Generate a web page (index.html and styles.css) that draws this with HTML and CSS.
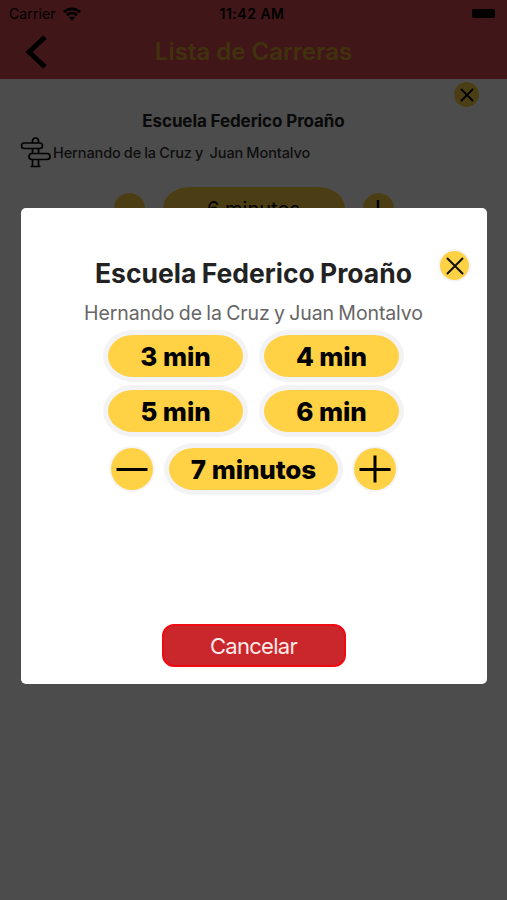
FILE: index.html
```
<!DOCTYPE html>
<html lang="es">

<head>
    <meta charset="UTF-8">
    <meta name="viewport" content="width=device-width, initial-scale=1.0">

    <title>Lista de Carreras</title>

    <link rel="stylesheet" href="styles.css">
</head>

<body>
    <header>
        <div class="estado">
            <div class="operadora">
                <span class="carrier">Carrier</span>
                <svg width="18" height="14" viewBox="0 0 18 14" fill="none" stroke="#000" stroke-width="2.8">
                    <path d="M1 5.2C5.5 .8 12.5 .8 17 5.2" />
                    <path d="M4 8.3c2.9-2.8 7.1-2.8 10 0" />
                    <path d="M9 13.4 6.1 10.5c1.8-1.4 4-1.4 5.8 0z" fill="#000" stroke="none" />
                </svg>
            </div>
            <span class="hora">11:42 AM</span>
            <div class="bateria"></div>
        </div>
        <div class="barra">
            <svg class="atras" width="22" height="34" viewBox="0 0 22 34" fill="none" stroke="#000" stroke-width="5">
                <path d="M20 2 4 17l16 15" />
            </svg>
            <h1>Lista de Carreras</h1>
        </div>
    </header>

    <main>
        <button class="cerrar chico">
            <svg width="14" height="14" viewBox="0 0 14 14" stroke="#000" stroke-width="1.8">
                <path d="M1 1l12 12M13 1 1 13" />
            </svg>
        </button>
        <h2>Escuela Federico Proaño</h2>
        <div class="direccion">
            <svg width="32" height="32" viewBox="0 0 32 32" fill="none" stroke="#000" stroke-width="1.7">
                <path d="M12.500 7V5a3 3 0 0 1 6 0v2M12.500 13v4M18.500 13v4M12.500 24v6M18.500 24v6M10.500 30.500h10" />
                <rect x="1.500" y="7" width="21" height="5.500" rx="2.750" />
                <rect x="9" y="17.500" width="21" height="6" rx="3" />
            </svg>
            <p>Hernando de la Cruz y&nbsp; Juan Montalvo</p>
        </div>
        <div class="fila fondo">
            <button class="redondo"></button>
            <button class="minutos">6 minutos</button>
            <button class="redondo">
                <svg width="20" height="20" viewBox="0 0 20 20" stroke="#000" stroke-width="2.5">
                    <path d="M10 1v18M1 11h18" />
                </svg>
            </button>
        </div>
    </main>

    <div class="capa">
        <div class="modal">
            <button class="cerrar">
                <svg width="18" height="18" viewBox="0 0 18 18" stroke="#111" stroke-width="2" stroke-linecap="round">
                    <path d="M1.500 1.500l15 15M16.500 1.500l-15 15" />
                </svg>
            </button>
            <h2>Escuela Federico Proaño</h2>
            <p>Hernando de la Cruz y Juan Montalvo</p>

            <div class="opciones">
                <button class="opcion">3 min</button>
                <button class="opcion">4 min</button>
                <button class="opcion">5 min</button>
                <button class="opcion">6 min</button>
            </div>

            <div class="fila">
                <button class="redondo">
                    <svg width="32" height="28" viewBox="0 0 32 28" stroke="#000" stroke-width="3">
                        <path d="M.5 14.500h31" />
                    </svg>
                </button>
                <button class="opcion larga">7 minutos</button>
                <button class="redondo">
                    <svg width="32" height="28" viewBox="0 0 32 28" stroke="#000" stroke-width="3">
                        <path d="M.5 14.500h31M16 .5v27" />
                    </svg>
                </button>
            </div>

            <button class="cancelar">Cancelar</button>
        </div>
    </div>
</body>

</html>
```
FILE: styles.css
```
* {
    margin: 0;
    padding: 0;
    box-sizing: border-box;
}

body {
    height: 900px;
    overflow: hidden;

    background-color: white;

    font-family: "Inter", sans-serif;
}

button {
    display: flex;
    align-items: center;
    justify-content: center;

    border: none;

    background-color: #ffd145;
    color: black;

    font-family: inherit;
    white-space: nowrap;
}

h1, h2, p, span {
    white-space: nowrap;
}

header {
    height: 79px;

    background-color: #d54a51;
}

.estado {
    display: grid;
    grid-template-columns: 1fr auto 1fr;
    align-items: center;

    height: 27px;
    padding: 0 12px 0 9px;

    font-size: 14px;
}

.operadora {
    display: flex;
    align-items: center;
    gap: 7px;
}

.carrier {
    letter-spacing: 0.1px;
}

.hora {
    font-weight: 600;
    letter-spacing: 0.5px;
}

.bateria {
    width: 23px;
    height: 9px;
    justify-self: end;

    border-radius: 2px;

    background-color: black;
}

.barra {
    display: grid;
    grid-template-columns: 26px 1fr 26px;
    align-items: center;

    height: 49px;
    padding: 0 25px;
}

h1 {
    color: #d9a52f;

    font-size: 24px;
    font-weight: 600;
    text-align: center;
}

main {
    display: flex;
    flex-direction: column;
    padding: 3px 20px;
}

main h2 {
    margin-top: 4px;
    padding-right: 20px;

    color: #222;

    font-size: 17px;
    line-height: 20px;
    text-align: center;
    letter-spacing: -0.1px;
}

.cerrar {
    width: 29px;
    height: 29px;

    border-radius: 50%;

    box-shadow: 0 0 0 2px #f5f5f8;
}

.chico {
    width: 25px;
    height: 25px;
    align-self: flex-end;
    margin-right: 8px;

    box-shadow: none;
}

.direccion {
    display: flex;
    align-items: center;

    height: 32px;
    margin-top: 5px;
}

.direccion p {
    padding-left: 1px;

    color: #333;

    font-size: 14.5px;
    font-weight: 500;
    letter-spacing: -0.1px;
    word-spacing: -0.6px;
}

.fila {
    display: flex;
    align-items: center;
    justify-content: center;
    gap: 16px;
}

.fondo {
    gap: 18px;
    margin-top: 19px;
}

.minutos {
    width: 182px;
    height: 43px;

    border-radius: 27px / 22px;

    font-size: 20px;
}

.redondo {
    width: 42px;
    height: 42px;

    border-radius: 50%;

    box-shadow: 0 0 0 2px #f5f5f8;
}

.fondo .redondo {
    width: 31px;
    height: 31px;

    box-shadow: none;
}

.capa {
    position: fixed;
    inset: 0;

    padding: 208px 20px 0 21px;

    background-color: rgba(0, 0, 0, 0.7);
}

.modal {
    display: flex;
    flex-direction: column;
    align-items: center;

    height: 476px;
    padding: 43px 1px 0 0;

    border-radius: 5px;

    background-color: white;
}

.modal .cerrar {
    align-self: flex-end;
    margin-right: 17px;
}

.modal h2 {
    margin-top: -24px;

    color: #222;

    font-size: 26.5px;
    line-height: 34px;
    word-spacing: -1px;
}

.modal p {
    margin-top: 13px;

    color: #666;

    font-size: 19.5px;
    line-height: 20px;
    letter-spacing: -0.1px;
    word-spacing: -1px;
}

.opciones {
    display: grid;
    grid-template-columns: 135px 135px;
    gap: 13px 21px;

    margin-top: 12px;
}

.opcion {
    height: 42px;

    border-radius: 25px / 21px;

    box-shadow: 0 0 0 5px #f3f3f5;

    font-size: 26px;
    font-weight: 800;
    letter-spacing: -0.1px;
}

.modal .fila {
    margin-top: 16px;
}

.larga {
    width: 169px;
}

.cancelar {
    width: 184px;
    height: 43px;
    margin-top: 134px;

    border: 2px solid #f00b12;
    border-radius: 12px;

    background-color: #c9272b;
    color: #ffe9e9;

    font-size: 22px;
    letter-spacing: -0.7px;
}
```
